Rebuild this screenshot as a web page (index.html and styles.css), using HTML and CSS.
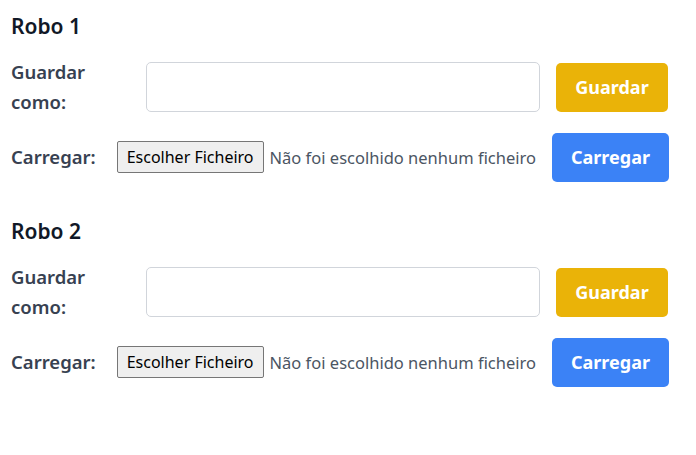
FILE: index.html
```html
<!DOCTYPE html>
<html lang="pt">
<head>
<meta charset="utf-8">
<link rel="stylesheet" href="styles.css">
</head>
<body>
<div class="page">
  <section class="robot">
    <h2 class="title">Robo 1</h2>
    <div class="row save-row">
      <label class="label label-fixed">Guardar como:</label>
      <input class="text-input" type="text">
      <button class="btn btn-yellow">Guardar</button>
    </div>
    <div class="row load-row">
      <label class="label">Carregar:</label>
      <div class="file">
        <span class="file-btn">Escolher Ficheiro</span>
        <span class="file-text">Não foi escolhido nenhum ficheiro</span>
      </div>
      <button class="btn btn-blue">Carregar</button>
    </div>
  </section>
  <section class="robot">
    <h2 class="title">Robo 2</h2>
    <div class="row save-row">
      <label class="label label-fixed">Guardar como:</label>
      <input class="text-input" type="text">
      <button class="btn btn-yellow">Guardar</button>
    </div>
    <div class="row load-row">
      <label class="label">Carregar:</label>
      <div class="file">
        <span class="file-btn">Escolher Ficheiro</span>
        <span class="file-text">Não foi escolhido nenhum ficheiro</span>
      </div>
      <button class="btn btn-blue">Carregar</button>
    </div>
  </section>
</div>
</body>
</html>
```

FILE: styles.css
```css
* { box-sizing: border-box; }
body {
  margin: 0;
  background: #ffffff;
  font-family: "Noto Sans", "Open Sans", sans-serif;
}
.page {
  width: 668px;
  padding: 12px 0 0 11px;
}
.robot {
  margin-bottom: 35px;
}
.title {
  margin: 0 0 22px 0;
  font-size: 21px;
  line-height: 28px;
  font-weight: 600;
  color: #111827;
}
.row {
  display: flex;
  align-items: center;
  gap: 16px;
}
.save-row {
  height: 50px;
  margin-bottom: 20px;
}
.load-row {
  height: 50px;
}
.label {
  font-size: 18.5px;
  line-height: 30px;
  font-weight: 600;
  color: #374151;
}
.label-fixed {
  width: 119px;
  flex: none;
}
.text-input {
  flex: 1;
  height: 50px;
  border: 1px solid #d1d5db;
  border-radius: 5px;
  background: #fff;
  outline: none;
}
.btn {
  flex: none;
  height: 49px;
  border: none;
  border-radius: 5px;
  padding: 0;
  font-family: inherit;
  font-size: 18px;
  font-weight: 700;
  color: #ffffff;
}
.btn-yellow { background: #eab308; width: 112px; }
.btn-blue { background: #3b82f6; width: 117px; }
.file {
  flex: 1;
  display: flex;
  align-items: center;
  gap: 6px;
  margin-left: 5px;
}
.file-btn {
  display: inline-block;
  height: 32px;
  line-height: 30px;
  padding: 0 9px;
  background: #efefef;
  border: 1px solid #767676;
  border-radius: 2px;
  font-size: 16px;
  color: #000;
  white-space: nowrap;
}
.file-text {
  font-size: 16.5px;
  color: #4b5563;
  white-space: nowrap;
}
```
